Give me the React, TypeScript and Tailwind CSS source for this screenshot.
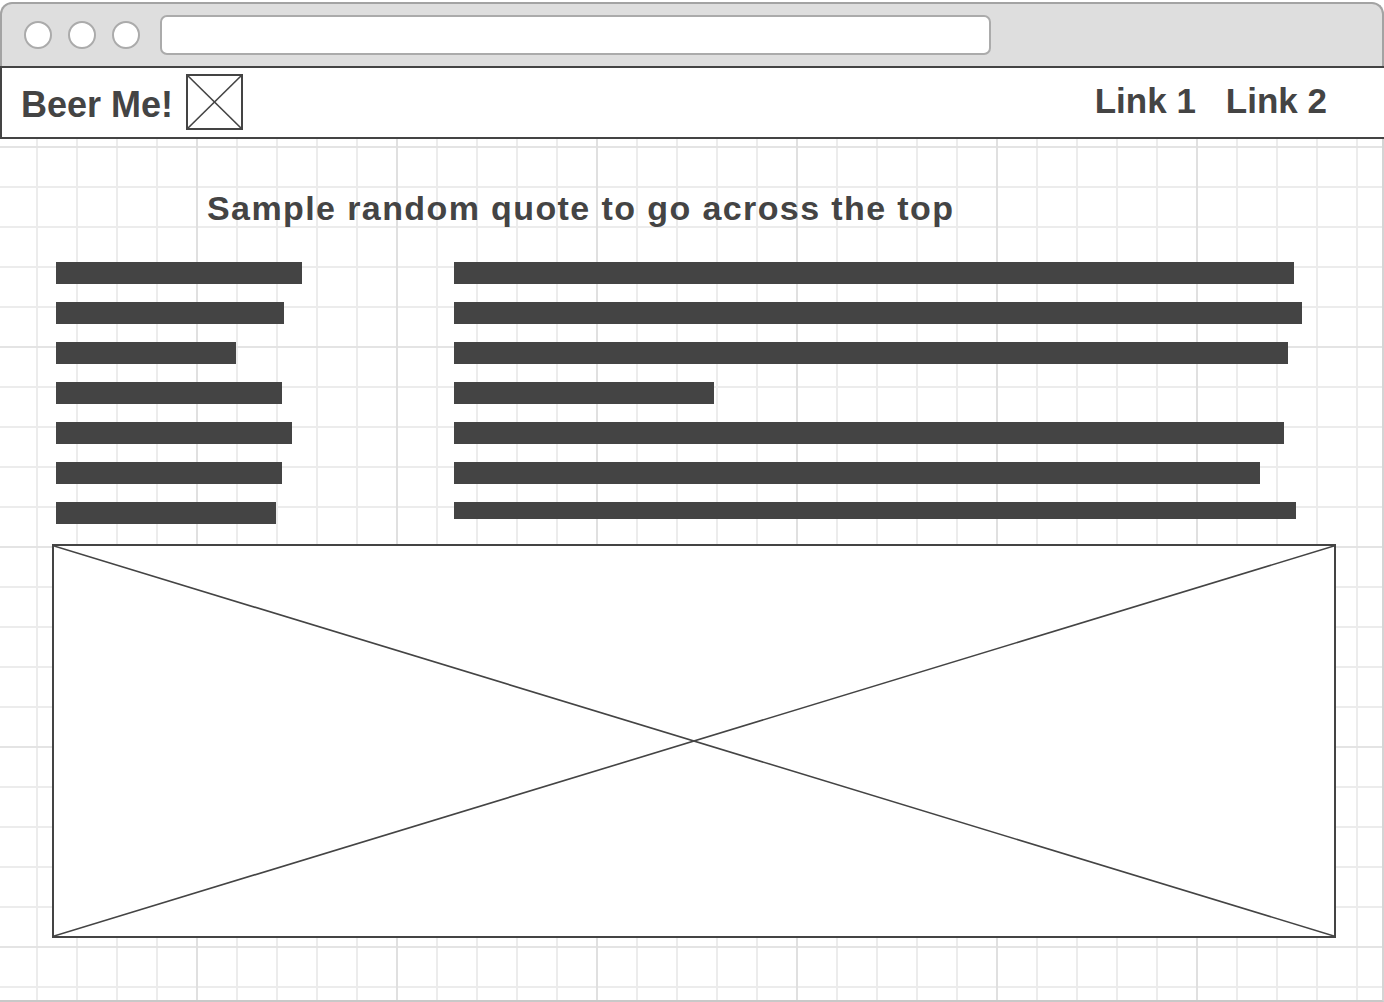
import React from "react";

const leftBars = [246, 228, 180, 226, 236, 226, 220];
const rightBars = [
  { w: 840, h: 22 },
  { w: 848, h: 22 },
  { w: 834, h: 22 },
  { w: 260, h: 22 },
  { w: 830, h: 22 },
  { w: 806, h: 22 },
  { w: 842, h: 17 },
];

function CrossBox({ className }: { className: string }) {
  return (
    <div className={`border-2 border-[#444] bg-white ${className}`}>
      <svg className="block h-full w-full" viewBox="0 0 100 100" preserveAspectRatio="none">
        <line x1="0" y1="0" x2="100" y2="100" stroke="#444" strokeWidth="1.6" vectorEffect="non-scaling-stroke" />
        <line x1="100" y1="0" x2="0" y2="100" stroke="#444" strokeWidth="1.6" vectorEffect="non-scaling-stroke" />
      </svg>
    </div>
  );
}

export default function App() {
  return (
    <div className="w-[1384px] h-[1002px] overflow-hidden bg-white pt-[2px] font-['Liberation_Sans',Arial,sans-serif] text-[#444]">
      {/* Title bar */}
      <div className="flex h-[64px] items-center rounded-t-[12px] border-x-2 border-t-2 border-[#a3a3a3] bg-[#dedede] pl-[22px]">
        <div className="flex gap-[16px]">
          <div className="h-[28px] w-[28px] rounded-full border-2 border-[#ababab] bg-white" />
          <div className="h-[28px] w-[28px] rounded-full border-2 border-[#ababab] bg-white" />
          <div className="h-[28px] w-[28px] rounded-full border-2 border-[#ababab] bg-white" />
        </div>
        <div className="ml-[20px] mt-[-1px] h-[40px] w-[831px] rounded-[7px] border-2 border-[#ababab] bg-white" />
      </div>

      {/* Nav */}
      <div className="flex h-[73px] items-start border-y-2 border-l-2 border-[#444] bg-white">
        <div className="ml-[19px] mt-[19px] text-[36px] font-bold leading-none">Beer Me!</div>
        <CrossBox className="ml-[13px] mt-[6px] h-[56px] w-[57px]" />
        <div className="ml-auto mr-[57px] mt-[15px] flex gap-[30px] text-[35px] font-bold leading-none">
          <span>Link 1</span>
          <span>Link 2</span>
        </div>
      </div>

      {/* Canvas with grid */}
      <div className="h-[863px] border-b-2 border-r-2 border-b-[#c8c8c8] border-r-[#d4d4d4] [background-image:linear-gradient(to_right,#e0e0e0_2px,transparent_2px),linear-gradient(to_bottom,#e4e4e4_2px,transparent_2px),linear-gradient(to_right,#ececec_2px,transparent_2px),linear-gradient(to_bottom,#ececec_2px,transparent_2px)] [background-size:200px_100%,100%_200px,40px_100%,100%_40px] [background-position:196px_0,0_207px,36px_0,0_7px]">
        <div className="pl-[207px] pt-[52px] text-[34px] font-bold leading-none tracking-[1.4px]">
          Sample random quote to go across the top
        </div>
        <div className="mt-[37px] flex pl-[56px]">
          <div className="flex w-[398px] flex-col gap-[18px]">
            {leftBars.map((w, i) => (
              <div key={i} className="h-[22px] bg-[#444]" style={{ width: w }} />
            ))}
          </div>
          <div className="flex flex-col gap-[18px]">
            {rightBars.map((b, i) => (
              <div key={i} className="bg-[#444]" style={{ width: b.w, height: b.h }} />
            ))}
          </div>
        </div>
        <CrossBox className="ml-[52px] mt-[20px] h-[394px] w-[1284px]" />
      </div>
    </div>
  );
}
